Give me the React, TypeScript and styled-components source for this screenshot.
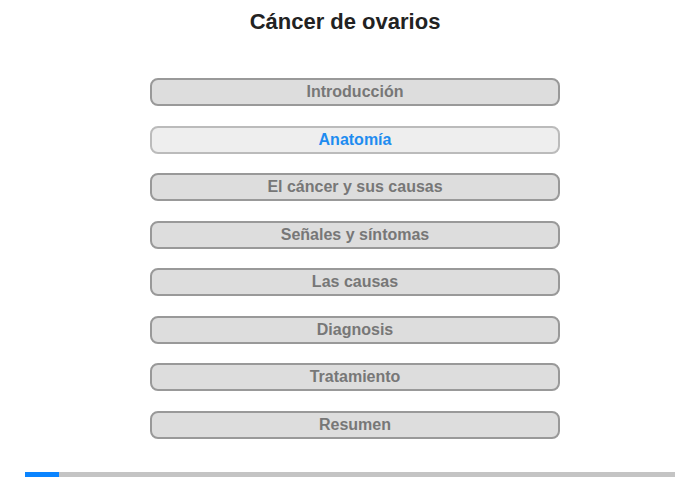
import React from "react";
import styled, { createGlobalStyle } from "styled-components";

const Global = createGlobalStyle`
  html, body { margin: 0; padding: 0; background: #fff; }
  body { font-family: "Liberation Sans", Arial, sans-serif; }
`;

const Page = styled.div`
  width: 700px;
  height: 480px;
  display: flex;
  flex-direction: column;
  align-items: center;
  box-sizing: border-box;
  padding-top: 8px;
`;

const Title = styled.h1`
  margin: 0 10px 0 0;
  font-size: 22px;
  line-height: 28px;
  font-weight: bold;
  color: #222;
`;

const Menu = styled.nav`
  margin: 42px 0 0 10px;
  display: flex;
  flex-direction: column;
  gap: 19.5px;
`;

const Item = styled.button<{ $active?: boolean }>`
  width: 410px;
  height: 28px;
  box-sizing: border-box;
  border-radius: 8px;
  border: 2px solid ${(p) => (p.$active ? "#bbb" : "#999")};
  background: ${(p) => (p.$active ? "#eee" : "#ddd")};
  color: ${(p) => (p.$active ? "#1e8cf0" : "#777")};
  font-family: "Liberation Sans", Arial, sans-serif;
  font-weight: bold;
  font-size: 16px;
  line-height: 24px;
  padding: 0;
  text-align: center;
  cursor: pointer;
`;

const Progress = styled.div`
  margin-top: 33px;
  width: 650px;
  height: 5px;
  background: #c4c4c4;
  display: flex;
`;

const Fill = styled.div`
  height: 100%;
  background: #0a84ff;
`;

const items = [
  "Introducción",
  "Anatomía",
  "El cáncer y sus causas",
  "Señales y síntomas",
  "Las causas",
  "Diagnosis",
  "Tratamiento",
  "Resumen",
];

export default function App() {
  return (
    <>
      <Global />
      <Page>
        <Title>Cáncer de ovarios</Title>
        <Menu>
          {items.map((t, i) => (
            <Item key={t} $active={i === 1}>
              {t}
            </Item>
          ))}
        </Menu>
        <Progress>
          <Fill style={{ width: `${(34 / 650) * 100}%` }} />
        </Progress>
      </Page>
    </>
  );
}
